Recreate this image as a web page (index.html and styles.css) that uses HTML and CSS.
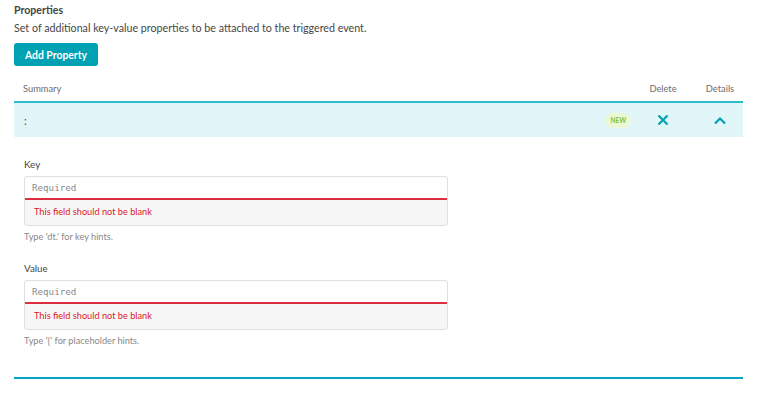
FILE: index.html
```html
<!DOCTYPE html>
<html>
<head>
<meta charset="utf-8">
<link rel="stylesheet" href="styles.css">
</head>
<body>
<div class="page">
  <div class="title">Properties</div>
  <div class="desc">Set of additional key-value properties to be attached to the triggered event.</div>
  <button class="btn">Add Property</button>
  <div class="thead">
    <div class="th-summary">Summary</div>
    <div class="col-delete">Delete</div>
    <div class="col-details">Details</div>
  </div>
  <div class="row">
    <div class="row-summary">:</div>
    <div class="badge">NEW</div>
    <div class="col-delete">
      <svg width="12" height="12" viewBox="0 0 12 12"><path d="M1.5 1.5 L10.5 10.5 M10.5 1.5 L1.5 10.5" stroke="#00a1b2" stroke-width="2.2" fill="none"/></svg>
    </div>
    <div class="col-details">
      <svg width="14" height="9" viewBox="0 0 14 9"><path d="M2 7.5 L7 2.5 L12 7.5" stroke="#00a1b2" stroke-width="2.2" fill="none"/></svg>
    </div>
  </div>
  <div class="details">
    <div class="field">
      <div class="label">Key</div>
      <div class="box">
        <div class="input">Required</div>
        <div class="error">This field should not be blank</div>
      </div>
      <div class="hint">Type 'dt.' for key hints.</div>
    </div>
    <div class="field">
      <div class="label">Value</div>
      <div class="box">
        <div class="input">Required</div>
        <div class="error">This field should not be blank</div>
      </div>
      <div class="hint">Type '{' for placeholder hints.</div>
    </div>
  </div>
  <div class="bottom"></div>
</div>
</body>
</html>
```
FILE: styles.css
```css
* { box-sizing: border-box; }
body {
  margin: 0;
  background: #fff;
  font-family: Lato, "Open Sans", sans-serif;
  color: #454646;
}
.page {
  padding: 3px 16px 0 14px;
}
.title {
  font-size: 10.6px;
  font-weight: 700;
  line-height: 14px;
}
.desc {
  font-size: 10.7px;
  line-height: 16px;
  margin-top: 3px;
}
.btn {
  display: block;
  margin-top: 7px;
  width: 84px;
  height: 23px;
  padding: 0;
  border: none;
  border-radius: 3px;
  background: #00a1b2;
  color: #fff;
  font-family: Lato, sans-serif;
  font-weight: 700;
  font-size: 10.4px;
}
.thead {
  display: flex;
  align-items: center;
  margin-top: 10px;
  height: 25px;
  font-size: 9.3px;
  color: #6d6d6d;
  border-bottom: 2px solid #2bbdcd;
  box-sizing: content-box;
}
.th-summary { flex: 1; padding-left: 9px; }
.col-delete { width: 48px; margin-right: 10px; text-align: center; display: flex; justify-content: center; }
.col-details { width: 46px; text-align: center; display: flex; justify-content: center; }
.row {
  display: flex;
  align-items: center;
  height: 34px;
  background: #e1f6f9;
  font-size: 11px;
}
.row-summary { flex: 1; padding-left: 10px; }
.badge {
  background: #eaf8d6;
  color: #7cc242;
  font-size: 6.5px;
  font-weight: 700;
  padding: 4px 5px;
  border-radius: 8px;
  margin-right: 8px;
}
.details {
  padding: 21px 0 0 10px;
}
.field + .field { margin-top: 19px; }
.label {
  font-size: 9.8px;
  line-height: 12px;
  margin-bottom: 6px;
}
.box {
  width: 424px;
  border: 1px solid #e0e0e0;
  border-radius: 3px;
  background: #f7f7f7;
}
.input {
  height: 23px;
  background: #fff;
  border-bottom: 2px solid #dc2e3e;
  font-family: "DejaVu Sans Mono", monospace;
  font-size: 9.2px;
  color: #8a8a8a;
  padding: 5px 0 0 7px;
  border-radius: 3px 3px 0 0;
}
.error {
  height: 25px;
  color: #dc172a;
  font-size: 9.2px;
  padding: 6px 0 0 9px;
}
.hint {
  font-size: 9.2px;
  color: #898989;
  margin-top: 5px;
  line-height: 12px;
}
.bottom {
  margin-top: 30px;
  border-top: 2px solid #00a8bd;
}
```
